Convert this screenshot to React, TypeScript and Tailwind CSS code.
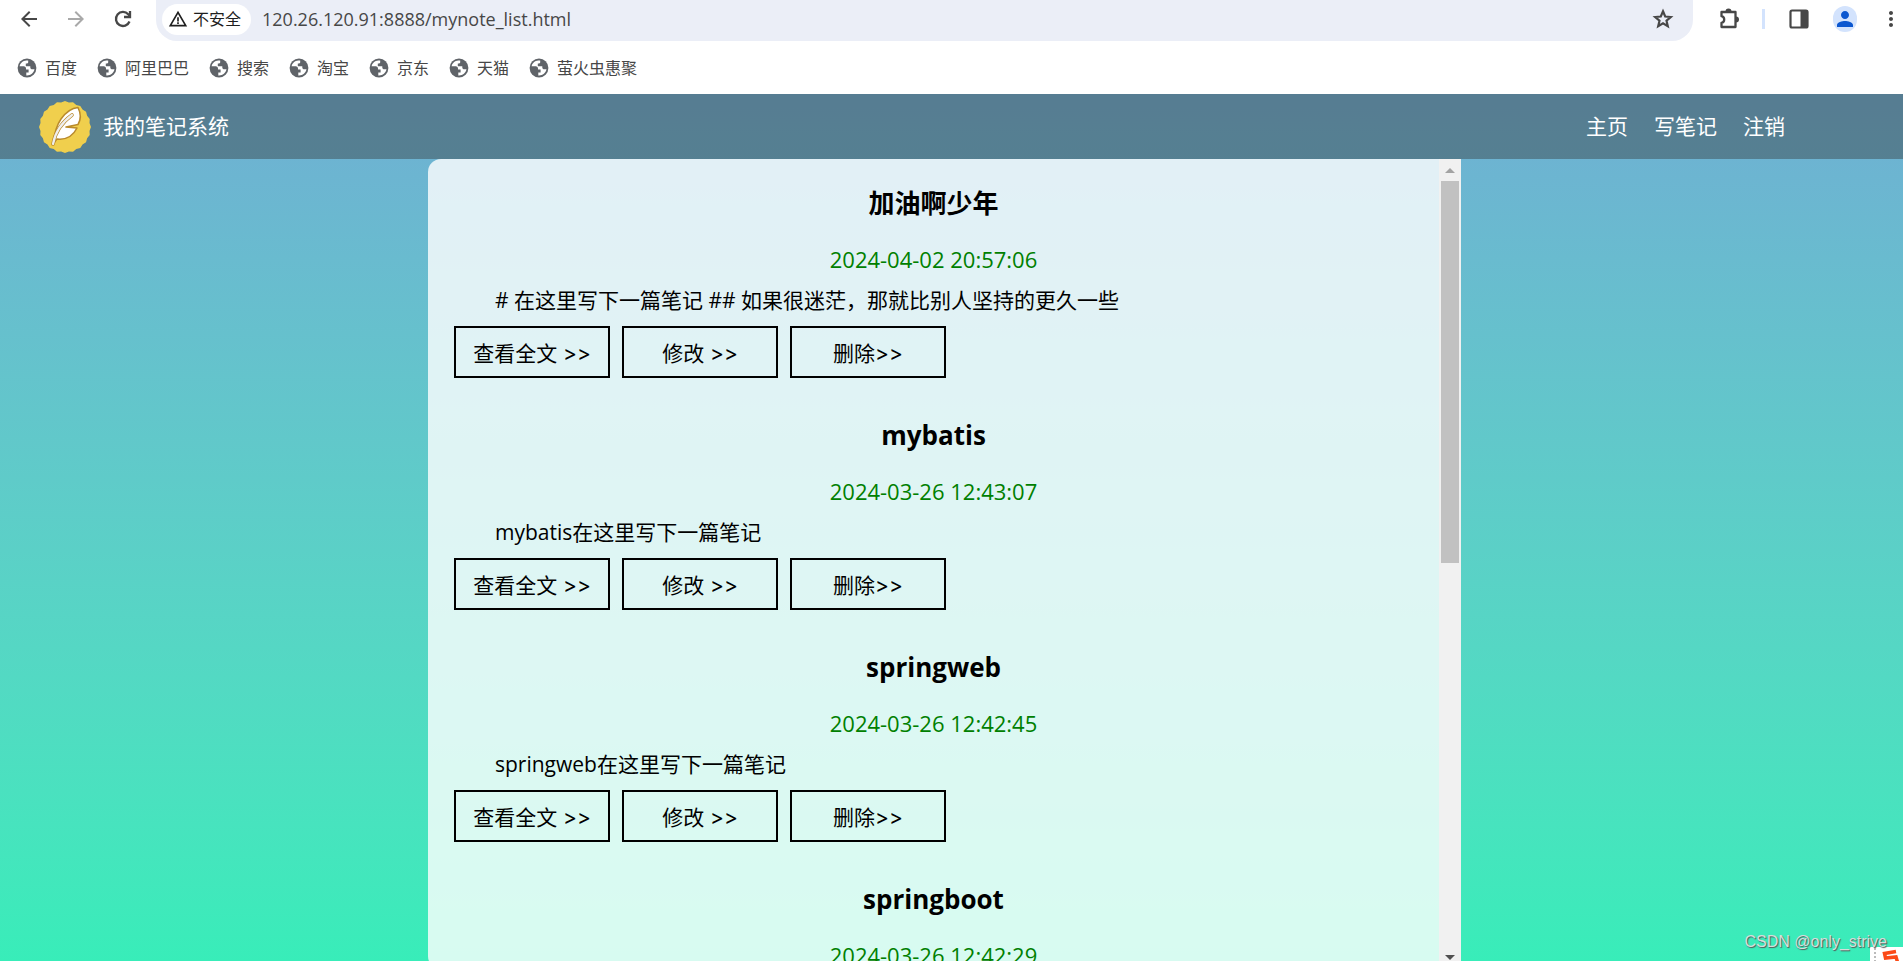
import React from "react";
import { MdArrowBack, MdArrowForward, MdPerson, MdMoreVert, MdWarningAmber } from "react-icons/md";

type Note = {
  title: string;
  date: string;
  desc?: string;
};

const bookmarks = ["百度", "阿里巴巴", "搜索", "淘宝", "京东", "天猫", "萤火虫惠聚"];

const navLinks = ["主页", "写笔记", "注销"];

const notes: Note[] = [
  {
    title: "加油啊少年",
    date: "2024-04-02 20:57:06",
    desc: "# 在这里写下一篇笔记 ## 如果很迷茫，那就比别人坚持的更久一些",
  },
  {
    title: "mybatis",
    date: "2024-03-26 12:43:07",
    desc: "mybatis在这里写下一篇笔记",
  },
  {
    title: "springweb",
    date: "2024-03-26 12:42:45",
    desc: "springweb在这里写下一篇笔记",
  },
  {
    title: "springboot",
    date: "2024-03-26 12:42:29",
  },
];

// 20 shallow scallops around the seal
const sealPoints = Array.from({ length: 40 }, (_, i) => {
  const r = i % 2 === 0 ? 26 : 24.8;
  const a = (i * Math.PI) / 20;
  return `${26 + r * Math.sin(a)},${26 - r * Math.cos(a)}`;
}).join(" ");

function GlobeIcon() {
  return (
    <svg viewBox="0 0 20 20" className="size-5 shrink-0">
      <circle cx="10" cy="10" r="9.4" fill="#5f6368" />
      <path
        fill="#fff"
        d="M9.2 2.4C6 2.6 3.2 5 2.6 8.3h4.2c1.2 0 2.2 1 2.2 2.1v1.1h2.6v3.1H9.3v2.9c3.900.400 7.500-2.400 8.200-6.200h-2.200c-1.200 0-2-.8-2-1.900V8.300H8.800V5.400h1.300c.7 0 1.100-.5 1.100-1.100V2.500z"
      />
    </svg>
  );
}

function ReloadIcon() {
  return (
    <svg viewBox="0 0 24 24" className="size-6" fill="none" stroke="currentColor" strokeWidth="2.300">
      <path d="M18.500 14.500a7 7 0 1 1-1.300-7.200l2 2" />
      <path d="M19 4v6h-6" />
    </svg>
  );
}

function StarIcon() {
  return (
    <svg viewBox="0 0 24 24" className="size-6" fill="none" stroke="currentColor" strokeWidth="2.200">
      <path d="M12 4.300l2.200 5.200 5.600.500-4.300 3.700 1.300 5.500-4.800-2.900-4.800 2.900 1.300-5.500-4.300-3.700 5.600-.500z" />
    </svg>
  );
}

function ExtensionIcon() {
  return (
    <svg viewBox="0 0 24 24" className="size-6">
      <path
        d="M4.500 5h14v15h-14v-4.200c1.800-.3 2.700-1.500 2.700-3.300s-.9-3-2.700-3.300z"
        fill="none"
        stroke="currentColor"
        strokeWidth="2.300"
        strokeLinejoin="round"
      />
      <path d="M8.500 4.500a3 3 0 0 1 6 0zM19 9.500a3 3 0 0 1 0 6z" fill="currentColor" />
    </svg>
  );
}

function Logo() {
  return (
    <svg viewBox="0 0 52 52" className="size-[52px]">
      <polygon points={sealPoints} fill="#f0cf4d" />
      <path
        d="M14 43c1-8 3-18 8-25C27 11 33 7 39 6.500c3 6 3 12 0 17l-12 2.500 11 1c-4 8-11 12-20 11z"
        fill="#fff"
        stroke="#b98a2c"
        strokeWidth="1.500"
        strokeLinejoin="round"
      />
      <path d="M14 43c2-11 8-21 19-29" fill="none" stroke="#b98a2c" strokeWidth="3.600" strokeLinecap="round" />
      <path d="M14 43c2-11 8-21 19-29" fill="none" stroke="#eee" strokeWidth="2.200" strokeLinecap="round" />
    </svg>
  );
}

function Browser() {
  return (
    <div className="h-[94px] shrink-0 bg-white text-[#474747]">
      <div className="flex h-[41px] items-start">
        <div className="flex h-[38px] w-[156px] shrink-0 items-center gap-[23px] pl-[17px]">
          <button aria-label="back"><MdArrowBack className="size-6" /></button>
          <button aria-label="forward"><MdArrowForward className="size-6 text-[#a9a9a9]" /></button>
          <button aria-label="reload"><ReloadIcon /></button>
        </div>
        <div className="flex h-[41px] flex-1 items-center rounded-b-[21px] bg-[#ebeef7] pb-[3px] pl-[6px] pr-[18px]">
          <button className="flex h-[31px] items-center gap-[5px] rounded-full bg-white pr-[10px] pl-[6px] text-base text-[#1f1f1f]">
            <MdWarningAmber className="size-5" />
            不安全
          </button>
          <input
            aria-label="url"
            defaultValue="120.26.120.91:8888/mynote_list.html"
            className="ml-[11px] flex-1 bg-transparent text-lg outline-none"
          />
          <button aria-label="star"><StarIcon /></button>
        </div>
        <div className="flex h-[38px] w-[210px] shrink-0 items-center pl-6">
          <button aria-label="extensions"><ExtensionIcon /></button>
          <div className="ml-[21px] h-5 w-[3px] bg-[#d3e3fd]" />
          <button aria-label="side panel" className="ml-6">
            <svg viewBox="0 0 20 20" className="size-5">
              <rect x="1.500" y="1.500" width="17" height="17" rx="1.500" fill="none" stroke="currentColor" strokeWidth="2.200" />
              <path d="M11.500 1h7v18h-7z" fill="currentColor" />
            </svg>
          </button>
          <button aria-label="profile" className="ml-6 flex size-[26px] items-center justify-center rounded-full bg-[#d3e3fd] text-[#0b57d0]">
            <MdPerson className="size-6" />
          </button>
          <button aria-label="menu" className="ml-[22px]"><MdMoreVert className="size-6" /></button>
        </div>
      </div>
      <div className="flex h-[53px] items-center gap-5 pl-[17px]">
        {bookmarks.map((item) => (
          <a href="#" key={item} className="flex items-center gap-2 text-base">
            <GlobeIcon />
            {item}
          </a>
        ))}
      </div>
    </div>
  );
}

function NoteItem({ note }: { note: Note }) {
  const linkClass =
    "flex h-[52px] w-[156px] items-center justify-center border-2 border-black pt-1";
  return (
    <div className="h-[232px] pt-[25px]">
      <h3 className="text-center text-[26px] leading-[38px] font-bold">{note.title}</h3>
      <div className="mt-[21px] text-center text-[22px] leading-[32px] text-[#008000]">{note.date}</div>
      {note.desc && (
        <>
          <p className="mt-2 indent-[41px] leading-[34px]">{note.desc}</p>
          <div className="mt-[9px] flex gap-3 font-['Inter','Noto_Sans_CJK_SC',sans-serif]">
            <a href="#" className={linkClass}>查看全文 &gt;&gt;</a>
            <a href="#" className={linkClass}>修改 &gt;&gt;</a>
            <a href="#" className={linkClass}>删除&gt;&gt;</a>
          </div>
        </>
      )}
    </div>
  );
}

function App() {
  return (
    <div className="relative flex h-screen flex-col overflow-hidden font-['Open_Sans','Noto_Sans_CJK_SC',sans-serif]">
      <Browser />
      <div className="flex min-h-0 flex-1 flex-col bg-linear-to-b from-[#6fafd3] to-[#38edb9] text-[21px]">
        <header className="flex h-[65px] shrink-0 items-center bg-[#333333]/40 pr-[118px] pl-[39px] text-white">
          <Logo />
          <span className="ml-3">我的笔记系统</span>
          <nav className="ml-auto flex gap-[26px]">
            {navLinks.map((item) => (
              <a href="#" key={item}>{item}</a>
            ))}
          </nav>
        </header>
        {/* note list */}
        <main className="-mb-2 ml-[428px] flex min-h-0 w-[1033px] flex-1 overflow-hidden rounded-l-[13px] bg-white/80 text-black">
          <div className="min-w-0 flex-1 overflow-hidden px-[26px]">
            {notes.map((note) => (
              <NoteItem key={note.title} note={note} />
            ))}
          </div>
          {/* scrollbar */}
          <div className="flex w-[22px] shrink-0 flex-col items-center bg-[#f1f1f1]">
            <svg viewBox="0 0 22 22" className="size-[22px] shrink-0">
              <path d="M6 14h10l-5-5z" fill="#a3a3a3" />
            </svg>
            <div className="h-[382px] w-[18px] bg-[#c1c1c1]" />
            <svg viewBox="0 0 22 22" className="mt-auto size-[22px] shrink-0">
              <path d="M6 8h10l-5 5z" fill="#505050" />
            </svg>
          </div>
        </main>
      </div>
      {/* input method badge */}
      <div className="absolute right-0 bottom-0 h-[14px] w-[33px] overflow-hidden bg-white">
        <svg viewBox="0 0 33 14" className="h-[14px] w-[33px]">
          <path d="M5 1v13" stroke="#bbb" strokeWidth="2" strokeDasharray="2 2" />
          <path d="M26 4.500l-11.500 2 1 4.500 10.500-1 1.500 5" fill="none" stroke="#fb4a17" strokeWidth="3.500" />
        </svg>
      </div>
      <div className="absolute right-4 bottom-[7px] font-['Liberation_Sans',sans-serif] text-base text-[#d5dedb] [text-shadow:1px_1px_1px_#555]">
        CSDN @only_strive
      </div>
    </div>
  );
}

export default App;
